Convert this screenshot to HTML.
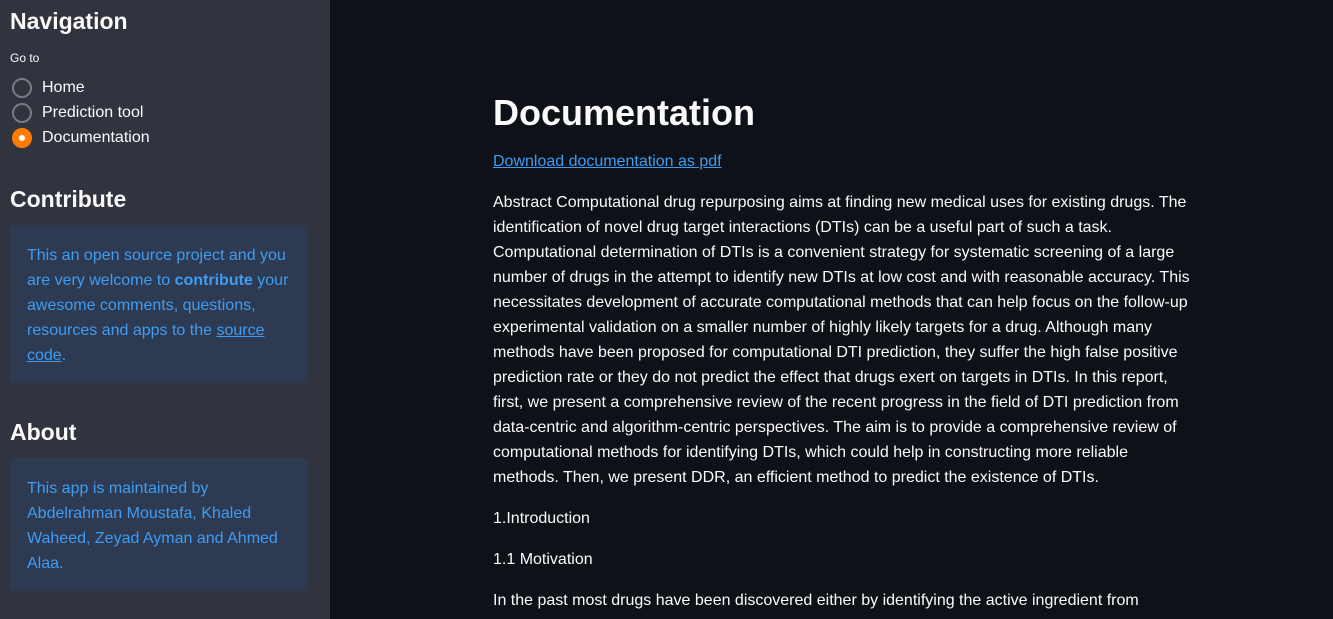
<!DOCTYPE html>
<html><head><meta charset="utf-8"><style>
body{margin:0;width:1333px;height:619px;overflow:hidden;background:#0e1117;font-family:"Liberation Sans",sans-serif;color:#fafafa;position:relative}
.sb{position:absolute;left:0;top:0;width:330px;height:619px;background:#31333f}
h2{font-size:23px;font-weight:bold;margin:0;position:absolute;left:10px}
.goto{position:absolute;left:10px;top:51px;font-size:12px}
.r{position:absolute;left:12px;font-size:16px;height:20px;line-height:20px}
.r i{position:absolute;left:0;top:0;width:20px;height:20px;border:2px solid #7a7b82;border-radius:50%;box-sizing:border-box}
.r span{position:absolute;left:30px;white-space:nowrap}
.r i.on{background:#ff7b00;border-color:#ff7b00}
.r i.on:after{content:"";position:absolute;left:5px;top:5px;width:6px;height:6px;background:#fff;border-radius:50%}
.box{position:absolute;left:10px;width:298px;background:#2e3a52;border-radius:4px;color:#3d9df3;font-size:16px;line-height:25px;padding:18px 17px 14px;box-sizing:border-box}
.box a{color:#3d9df3}
.main{position:absolute;left:493px;top:0;width:700px;font-size:16px;line-height:25px}
h1{position:absolute;top:93px;margin:0;font-size:36px;line-height:40px;font-weight:bold}
.main p{position:absolute;margin:0;left:0;width:700px}
a{color:#3d9df3}
</style></head><body>
<div class="sb">
<h2 style="top:8px">Navigation</h2>
<div class="goto">Go to</div>
<div class="r" style="top:78px"><i></i><span>Home</span></div>
<div class="r" style="top:103px"><i></i><span>Prediction tool</span></div>
<div class="r" style="top:128px"><i class="on"></i><span>Documentation</span></div>
<h2 style="top:186px">Contribute</h2>
<div class="box" style="top:225px;height:158px">This an open source project and you are very welcome to <b>contribute</b> your awesome comments, questions, resources and apps to the <a href="#">source code</a>.</div>
<h2 style="top:419px">About</h2>
<div class="box" style="top:458px;height:133px">This app is maintained by Abdelrahman Moustafa, Khaled Waheed, Zeyad Ayman and Ahmed Alaa.</div>
</div>
<div class="main">
<h1>Documentation</h1>
<p style="top:149px"><a href="#">Download documentation as pdf</a></p>
<p style="top:190px">Abstract Computational drug repurposing aims at finding new medical uses for existing drugs. The identification of novel drug target interactions (DTIs) can be a useful part of such a task. Computational determination of DTIs is a convenient strategy for systematic screening of a large number of drugs in the attempt to identify new DTIs at low cost and with reasonable accuracy. This necessitates development of accurate computational methods that can help focus on the follow-up experimental validation on a smaller number of highly likely targets for a drug. Although many methods have been proposed for computational DTI prediction, they suffer the high false positive prediction rate or they do not predict the effect that drugs exert on targets in DTIs. In this report, first, we present a comprehensive review of the recent progress in the field of DTI prediction from data-centric and algorithm-centric perspectives. The aim is to provide a comprehensive review of computational methods for identifying DTIs, which could help in constructing more reliable methods. Then, we present DDR, an efficient method to predict the existence of DTIs.</p>
<p style="top:506px">1.Introduction</p>
<p style="top:547px">1.1 Motivation</p>
<p style="top:588px">In the past most drugs have been discovered either by identifying the active ingredient from</p>
</div>
</body></html>
